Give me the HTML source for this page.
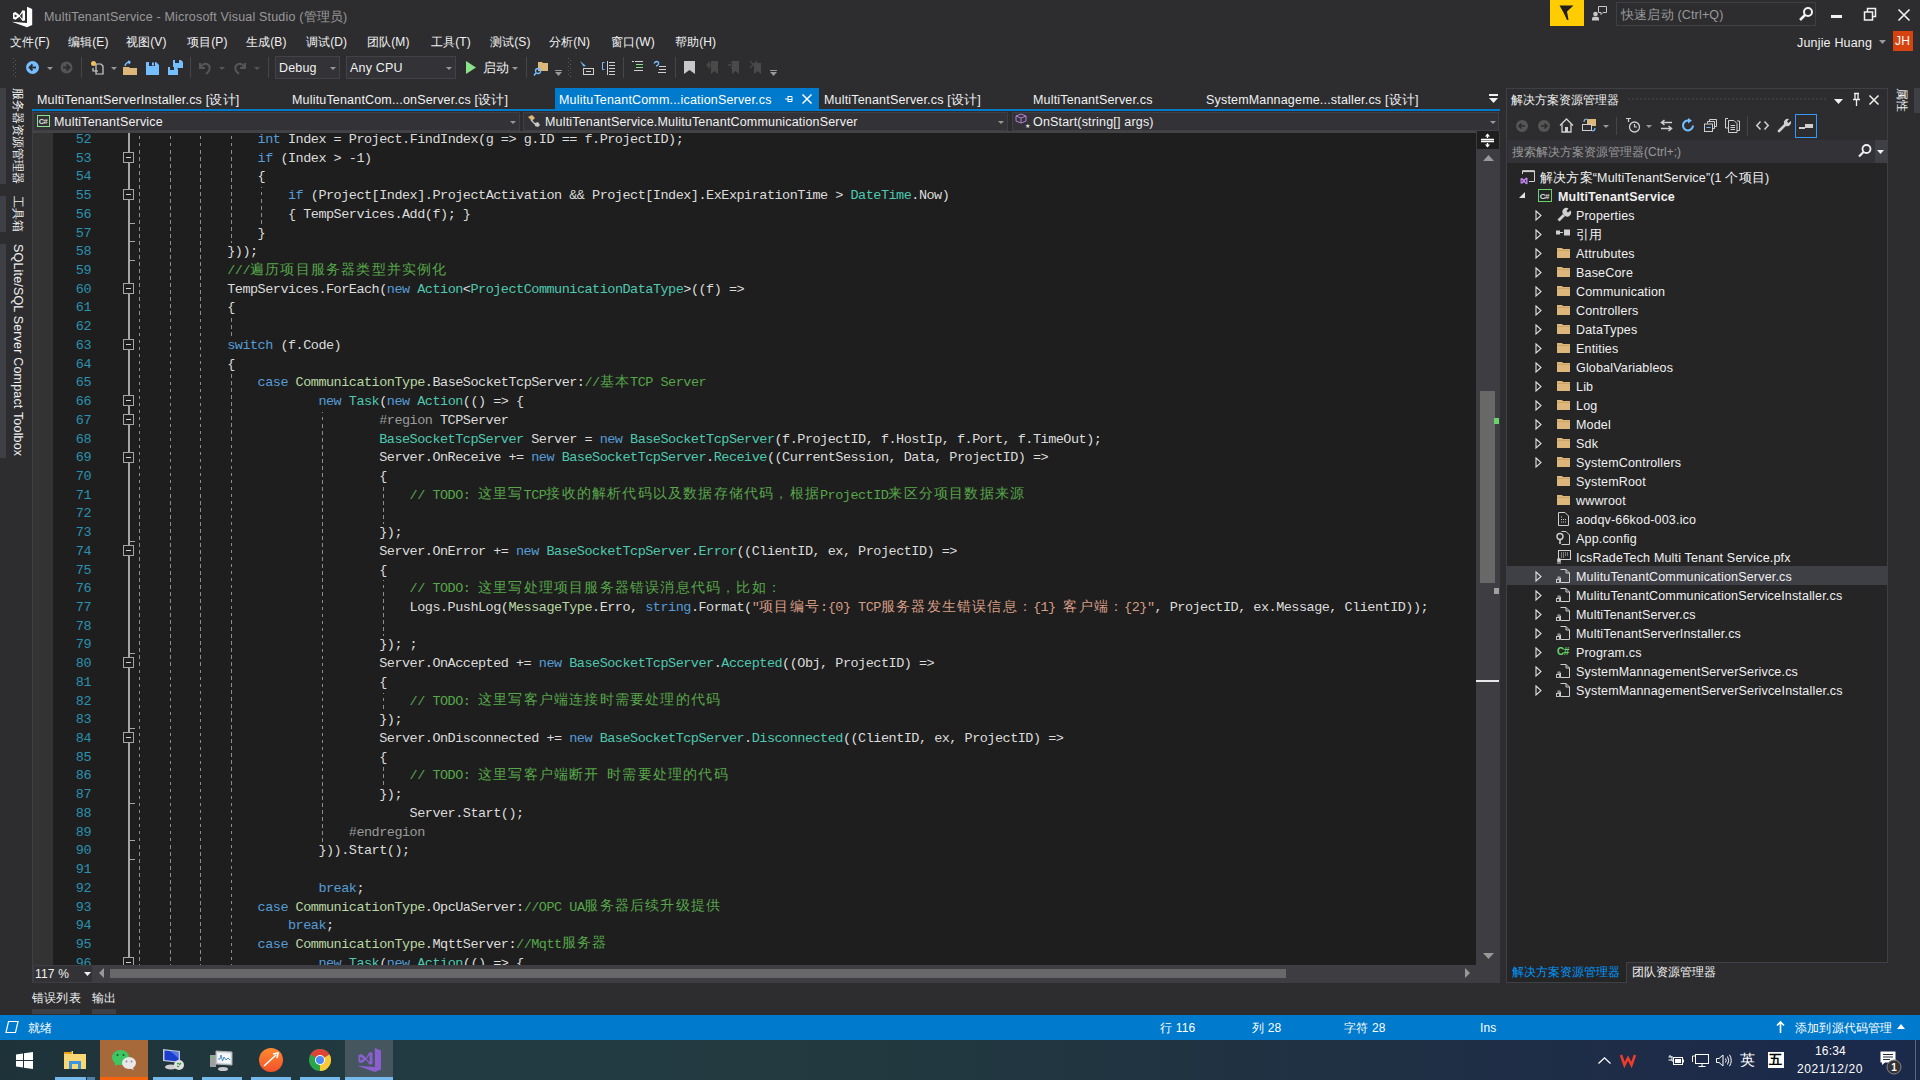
<!DOCTYPE html>
<html><head><meta charset="utf-8"><title>MultiTenantService - Microsoft Visual Studio</title>
<style>
*{margin:0;padding:0;box-sizing:border-box}
html,body{width:1920px;height:1080px;overflow:hidden;background:#2d2d30;font-family:"Liberation Sans",sans-serif;font-size:12px;color:#f1f1f1;position:relative}
.a{position:absolute}
.t{position:absolute;white-space:nowrap;line-height:16px;letter-spacing:0.18px}
svg{overflow:visible}
.code{position:absolute;white-space:pre;font-family:"Liberation Mono",monospace;font-size:13.5px;letter-spacing:-0.5px;color:#dcdcdc;line-height:18px;height:18px}
.code i{font-style:normal}
.code b.w{display:inline-block;font-weight:normal;overflow:hidden;vertical-align:top;position:relative;top:-1.5px;letter-spacing:1.2px;font-size:14px;height:18px}
.K{color:#569cd6}.T{color:#4ec9b0}.E{color:#b8d7a3}.C{color:#57a64a}.S{color:#d69d85}.P{color:#9b9b9b}
.lnum{position:absolute;font-family:"Liberation Mono",monospace;font-size:13.5px;letter-spacing:-0.5px;color:#2b91af;text-align:right;width:40px;line-height:18px}
.menu{font-size:12px;color:#f1f1f1;letter-spacing:0.1px}
.se{font-size:12.5px;color:#f1f1f1}
.guide{position:absolute;width:1px;background:repeating-linear-gradient(to bottom,transparent 0,transparent 2.6px,#8c8c8c 2.6px,#8c8c8c 6.1px,transparent 6.1px,transparent 7.02px);background-attachment:fixed}
</style></head><body>
<svg class="a" style="left:0px;top:0px" width="40" height="30" viewBox="0 0 40 30" ><path d="M27 6.8 L32.2 9 L32.2 25 L27 27.2 Z" fill="#fff"/><path d="M11.8 21.8 L27 23 L27 27.2 Z" fill="#fff"/><path fill-rule="evenodd" d="M13 13 L15.5 12 L19.5 15 L22.5 10.2 L25 10.8 L25 20.5 L22.5 21 L19.5 16.8 L15.5 19.8 L13 18.8 Z M14.6 14.2 L14.6 17.6 L17.4 15.9 Z M22.5 12.8 L22.5 19 L19.9 15.9 Z" fill="#fff"/></svg><div class="t " style="left:44px;top:9px;font-size:12.5px;color:#999999">MultiTenantService - Microsoft Visual Studio (<span class="cj">管理员</span>)</div><div class="a" style="left:1550px;top:0px;width:34px;height:26px;background:#ffcc00;"></div><svg class="a" style="left:1559px;top:5px" width="16" height="16" viewBox="0 0 16 16" ><path d="M0.5 0.5 L14.5 0.5 L8 6.5 L9.5 15 L8 15 L4.5 7.5 Z" fill="#1e1e1e"/></svg><svg class="a" style="left:1592px;top:5px" width="16" height="16" viewBox="0 0 16 16" ><circle cx="3.5" cy="9" r="2.3" fill="#c8c8c8"/><path d="M0 15.5 V13.5 Q0 11.8 2 11.8 H5 Q7 11.8 7 13.5 V15.5 Z" fill="#c8c8c8"/><path d="M6.5 1.5 H14.5 V7.5 H11 L9 9.5 V7.5 H6.5 Z" fill="none" stroke="#c8c8c8" stroke-width="1"/></svg><div class="a" style="left:1616px;top:2px;width:200px;height:24px;background:#2d2d30;border:1px solid #3f3f46"></div><div class="t " style="left:1621px;top:7px;font-size:12.5px;color:#999999"><span class="cj">快速启动</span> (Ctrl+Q)</div><svg class="a" style="left:1799px;top:7px" width="14" height="14" viewBox="0 0 14 14" ><circle cx="9" cy="5" r="4" fill="none" stroke="#f1f1f1" stroke-width="2"/><path d="M6 8 L1 13" stroke="#f1f1f1" stroke-width="2.5"/></svg><div class="a" style="left:1831px;top:15px;width:11px;height:3px;background:#f1f1f1;"></div><svg class="a" style="left:1864px;top:8px" width="13" height="13" viewBox="0 0 13 13" ><rect x="3.5" y="0.5" width="8" height="8" fill="none" stroke="#f1f1f1" stroke-width="1.5"/><rect x="0.5" y="4" width="8" height="8" fill="#2d2d30" stroke="#f1f1f1" stroke-width="1.5"/></svg><svg class="a" style="left:1898px;top:9px" width="12" height="12" viewBox="0 0 12 12" ><path d="M0.5 0.5 L11.5 11.5 M11.5 0.5 L0.5 11.5" stroke="#f1f1f1" stroke-width="1.6"/></svg><div class="t menu" style="left:10px;top:34px;"><span class="cj">文件</span>(F)</div><div class="t menu" style="left:68px;top:34px;"><span class="cj">编辑</span>(E)</div><div class="t menu" style="left:126px;top:34px;"><span class="cj">视图</span>(V)</div><div class="t menu" style="left:187px;top:34px;"><span class="cj">项目</span>(P)</div><div class="t menu" style="left:246px;top:34px;"><span class="cj">生成</span>(B)</div><div class="t menu" style="left:306px;top:34px;"><span class="cj">调试</span>(D)</div><div class="t menu" style="left:367px;top:34px;"><span class="cj">团队</span>(M)</div><div class="t menu" style="left:431px;top:34px;"><span class="cj">工具</span>(T)</div><div class="t menu" style="left:490px;top:34px;"><span class="cj">测试</span>(S)</div><div class="t menu" style="left:549px;top:34px;"><span class="cj">分析</span>(N)</div><div class="t menu" style="left:611px;top:34px;"><span class="cj">窗口</span>(W)</div><div class="t menu" style="left:675px;top:34px;"><span class="cj">帮助</span>(H)</div><div class="t " style="left:1797px;top:35px;font-size:12.5px;color:#f1f1f1">Junjie Huang</div><svg class="a" style="left:1879px;top:40px" width="7" height="4" viewBox="0 0 7 4" ><path d="M0 0 H7 L3.5 4 Z" fill="#999"/></svg><div class="a" style="left:1893px;top:31px;width:20px;height:20px;background:#d6430e;"></div><div class="t " style="left:1895px;top:33px;font-size:12px;color:#fff">JH</div><svg class="a" style="left:13px;top:58px" width="3" height="20" viewBox="0 0 3 20" ><rect x="0" y="0" width="1" height="1" fill="#5a5a5e"/><rect x="2" y="2" width="1" height="1" fill="#5a5a5e"/><rect x="0" y="4" width="1" height="1" fill="#5a5a5e"/><rect x="2" y="6" width="1" height="1" fill="#5a5a5e"/><rect x="0" y="8" width="1" height="1" fill="#5a5a5e"/><rect x="2" y="10" width="1" height="1" fill="#5a5a5e"/><rect x="0" y="12" width="1" height="1" fill="#5a5a5e"/><rect x="2" y="14" width="1" height="1" fill="#5a5a5e"/><rect x="0" y="16" width="1" height="1" fill="#5a5a5e"/><rect x="2" y="18" width="1" height="1" fill="#5a5a5e"/></svg><svg class="a" style="left:26px;top:61px" width="13" height="13" viewBox="0 0 13 13" ><circle cx="6.5" cy="6.5" r="6.5" fill="#75beff"/><path d="M10 6.5 H3.5 M6.5 3.5 L3.5 6.5 L6.5 9.5" stroke="#2d2d30" stroke-width="1.8" fill="none"/></svg><svg class="a" style="left:47px;top:67px" width="6" height="3" viewBox="0 0 6 3" ><path d="M0 0 H6 L3 3 Z" fill="#999999"/></svg><svg class="a" style="left:60px;top:61px" width="13" height="13" viewBox="0 0 13 13" ><circle cx="6.5" cy="6.5" r="6" fill="#555555"/><path d="M3 6.5 H9.5 M6.5 3.5 L9.5 6.5 L6.5 9.5" stroke="#2d2d30" stroke-width="1.8" fill="none"/></svg><div class="a" style="left:81px;top:57px;width:1px;height:21px;background:#46464a;"></div><svg class="a" style="left:90px;top:60px" width="14" height="15" viewBox="0 0 14 15" ><path d="M6 4 H11 L13 6 V14 H6 Z" fill="none" stroke="#d0d0d0" stroke-width="1.2"/><path d="M3 8 V11 H8" fill="none" stroke="#d0d0d0" stroke-width="1.2"/><circle cx="3.5" cy="3.5" r="2.5" fill="#f0c060"/></svg><svg class="a" style="left:111px;top:67px" width="6" height="3" viewBox="0 0 6 3" ><path d="M0 0 H6 L3 3 Z" fill="#999999"/></svg><svg class="a" style="left:123px;top:61px" width="15" height="14" viewBox="0 0 15 14" ><path d="M0 6 H6 L7 7 H14 V14 H0 Z" fill="#dcb67a"/><path d="M2 5 Q3 1 7 1 M5 0 L7 1 L6 3" stroke="#75beff" stroke-width="1.4" fill="none"/></svg><svg class="a" style="left:146px;top:62px" width="13" height="13" viewBox="0 0 13 13" ><path d="M0 0 H10 L13 3 V13 H0 Z" fill="#75beff"/><rect x="3" y="0" width="6" height="4" fill="#2d2d30"/><rect x="6" y="0.5" width="2" height="3" fill="#75beff"/></svg><svg class="a" style="left:168px;top:60px" width="15" height="15" viewBox="0 0 15 15" ><path d="M5 0 H13 L15 2 V8 H5 Z" fill="#75beff"/><path d="M0 7 H8 L10 9 V15 H0 Z" fill="#75beff"/><rect x="7" y="0" width="4" height="3" fill="#2d2d30"/><rect x="2" y="7" width="4" height="3" fill="#2d2d30"/></svg><div class="a" style="left:190px;top:57px;width:1px;height:21px;background:#46464a;"></div><svg class="a" style="left:198px;top:61px" width="14" height="14" viewBox="0 0 14 14" ><path d="M2 2 V7 H7 M2.5 6.5 Q5 2 9 3 Q13 5 11 10 L8 13" stroke="#555" stroke-width="2" fill="none"/></svg><svg class="a" style="left:219px;top:67px" width="6" height="3" viewBox="0 0 6 3" ><path d="M0 0 H6 L3 3 Z" fill="#555"/></svg><svg class="a" style="left:233px;top:61px" width="14" height="14" viewBox="0 0 14 14" ><path d="M12 2 V7 H7 M11.5 6.5 Q9 2 5 3 Q1 5 3 10 L6 13" stroke="#555" stroke-width="2" fill="none"/></svg><svg class="a" style="left:254px;top:67px" width="6" height="3" viewBox="0 0 6 3" ><path d="M0 0 H6 L3 3 Z" fill="#555"/></svg><div class="a" style="left:268px;top:57px;width:1px;height:21px;background:#46464a;"></div><div class="a" style="left:275px;top:56px;width:65px;height:23px;background:#333337;border:1px solid #434346"></div><div class="t " style="left:279px;top:60px;font-size:12.5px">Debug</div><svg class="a" style="left:330px;top:67px" width="6" height="3" viewBox="0 0 6 3" ><path d="M0 0 H6 L3 3 Z" fill="#999999"/></svg><div class="a" style="left:346px;top:56px;width:110px;height:23px;background:#333337;border:1px solid #434346"></div><div class="t " style="left:350px;top:60px;font-size:12.5px">Any CPU</div><svg class="a" style="left:446px;top:67px" width="6" height="3" viewBox="0 0 6 3" ><path d="M0 0 H6 L3 3 Z" fill="#999999"/></svg><svg class="a" style="left:466px;top:61px" width="10" height="13" viewBox="0 0 10 13" ><path d="M0 0 L10 6.5 L0 13 Z" fill="#8ae28a"/></svg><div class="t " style="left:483px;top:60px;font-size:12.5px"><span class="cj">启动</span></div><svg class="a" style="left:512px;top:67px" width="6" height="3" viewBox="0 0 6 3" ><path d="M0 0 H6 L3 3 Z" fill="#999999"/></svg><div class="a" style="left:526px;top:57px;width:1px;height:21px;background:#46464a;"></div><svg class="a" style="left:534px;top:60px" width="15" height="16" viewBox="0 0 15 16" ><path d="M4 2 H8 L9 3 H14 V11 H4 Z" fill="#dcb67a"/><circle cx="4" cy="11" r="2.5" fill="none" stroke="#75beff" stroke-width="1.3"/><path d="M2 13 L0 15.5" stroke="#75beff" stroke-width="1.5"/></svg><svg class="a" style="left:555px;top:70px" width="7" height="6" viewBox="0 0 7 6" ><rect x="0" y="0" width="7" height="1" fill="#999"/><path d="M0 2 H7 L3.5 6 Z" fill="#999"/></svg><svg class="a" style="left:568px;top:58px" width="3" height="20" viewBox="0 0 3 20" ><rect x="0" y="0" width="1" height="1" fill="#5a5a5e"/><rect x="2" y="2" width="1" height="1" fill="#5a5a5e"/><rect x="0" y="4" width="1" height="1" fill="#5a5a5e"/><rect x="2" y="6" width="1" height="1" fill="#5a5a5e"/><rect x="0" y="8" width="1" height="1" fill="#5a5a5e"/><rect x="2" y="10" width="1" height="1" fill="#5a5a5e"/><rect x="0" y="12" width="1" height="1" fill="#5a5a5e"/><rect x="2" y="14" width="1" height="1" fill="#5a5a5e"/><rect x="0" y="16" width="1" height="1" fill="#5a5a5e"/><rect x="2" y="18" width="1" height="1" fill="#5a5a5e"/></svg><svg class="a" style="left:580px;top:61px" width="14" height="14" viewBox="0 0 14 14" ><path d="M0 0 L6 5 L3.5 5.5 L5 8 Z" fill="#75beff"/><rect x="3.5" y="7.5" width="10" height="6" fill="none" stroke="#d0d0d0" stroke-width="1"/><rect x="6" y="10" width="5" height="1" fill="#d0d0d0"/></svg><svg class="a" style="left:601px;top:61px" width="14" height="14" viewBox="0 0 14 14" ><path d="M3.5 1.5 H1.5 V8.5 H3.5" stroke="#75beff" stroke-width="1" fill="none"/><path d="M6.5 0 V14" stroke="#d0d0d0" stroke-width="1"/><path d="M8 1.5 H14 M8 4.5 H14 M8 7.5 H14 M8 10.5 H14 M8 13.5 H14" stroke="#d0d0d0" stroke-width="1"/></svg><div class="a" style="left:623px;top:57px;width:1px;height:21px;background:#46464a;"></div><svg class="a" style="left:632px;top:61px" width="12" height="12" viewBox="0 0 12 12" ><path d="M3 0.5 H11 M4 3.5 H11 M4 6.5 H11 M2 9.5 H11" stroke="#d0d0d0" stroke-width="1"/><path d="M4 3.5 H11 M4 6.5 H11" stroke="#8ae28a" stroke-width="1"/><rect x="0" y="0" width="2" height="1" fill="#d0d0d0"/></svg><svg class="a" style="left:653px;top:61px" width="13" height="13" viewBox="0 0 13 13" ><path d="M1 2.5 Q2 0.5 4 0.5 Q6 1 5.5 3 Q5 4.5 3 5" stroke="#75beff" stroke-width="1.3" fill="none"/><path d="M6 5.5 H13 M6 8.5 H13 M5 11.5 H13" stroke="#d0d0d0" stroke-width="1"/></svg><div class="a" style="left:675px;top:57px;width:1px;height:21px;background:#46464a;"></div><svg class="a" style="left:684px;top:61px" width="11" height="13" viewBox="0 0 11 13" ><path d="M0 0 H11 V13 L5.5 9 L0 13 Z" fill="#c8c8c8"/></svg><svg class="a" style="left:707px;top:61px" width="12" height="13" viewBox="0 0 12 13" ><path d="M4 0 H11 V13 L7.5 10 L4 13 Z" fill="#4a4a4a"/><path d="M0 4 L3 1 M0 4 L3 7 M0 4 H6" stroke="#4a4a4a" stroke-width="1.5"/></svg><svg class="a" style="left:728px;top:61px" width="12" height="13" viewBox="0 0 12 13" ><path d="M4 0 H11 V13 L7.5 10 L4 13 Z" fill="#4a4a4a"/><path d="M0 4 H6 M3 1 L6 4 L3 7" stroke="#4a4a4a" stroke-width="1.5"/></svg><svg class="a" style="left:750px;top:61px" width="12" height="13" viewBox="0 0 12 13" ><path d="M4 2 H11 V13 L7.5 10 L4 13 Z" fill="#4a4a4a"/><path d="M0 0 L7 7 M7 0 L0 7" stroke="#4a4a4a" stroke-width="1.3"/></svg><svg class="a" style="left:770px;top:70px" width="7" height="6" viewBox="0 0 7 6" ><rect x="0" y="0" width="7" height="1" fill="#999"/><path d="M0 2 H7 L3.5 6 Z" fill="#999"/></svg><div class="a" style="left:0px;top:88px;width:6px;height:96px;background:#3f3f46;"></div><div class="a" style="left:0px;top:196px;width:6px;height:36px;background:#3f3f46;"></div><div class="a" style="left:0px;top:244px;width:6px;height:214px;background:#3f3f46;"></div><div class="t" style="left:26px;top:88px;transform-origin:0 0;transform:rotate(90deg);font-size:12.5px;color:#f1f1f1;font-size:11.8px;letter-spacing:0"><span class="cj">服务器资源管理器</span></div><div class="t" style="left:26px;top:196px;transform-origin:0 0;transform:rotate(90deg);font-size:12.5px;color:#f1f1f1;font-size:11.8px;letter-spacing:0"><span class="cj">工具箱</span></div><div class="t" style="left:26px;top:244px;transform-origin:0 0;transform:rotate(90deg);font-size:12.5px;color:#f1f1f1;">SQLite/SQL Server Compact Toolbox</div><div class="t " style="left:37px;top:92px;font-size:12.5px;color:#f1f1f1">MultiTenantServerInstaller.cs [<span class="cj">设计</span>]</div><div class="t " style="left:292px;top:92px;font-size:12.5px;color:#f1f1f1">MulituTenantCom...onServer.cs [<span class="cj">设计</span>]</div><div class="t " style="left:824px;top:92px;font-size:12.5px;color:#f1f1f1">MultiTenantServer.cs [<span class="cj">设计</span>]</div><div class="t " style="left:1033px;top:92px;font-size:12.5px;color:#f1f1f1">MultiTenantServer.cs</div><div class="t " style="left:1206px;top:92px;font-size:12.5px;color:#f1f1f1">SystemMannageme...staller.cs [<span class="cj">设计</span>]</div><div class="a" style="left:555px;top:88px;width:264px;height:22px;background:#007acc;"></div><div class="t " style="left:559px;top:92px;font-size:12.5px;color:#ffffff">MulituTenantComm...icationServer.cs</div><svg class="a" style="left:785px;top:95px" width="8" height="8" viewBox="0 0 8 8" ><path d="M0 4 H3 M3 1 V7 M3 1.5 H7 V6.5 H3 M3 4.5 H7" stroke="#fff" stroke-width="1" fill="none"/></svg><svg class="a" style="left:802px;top:94px" width="10" height="10" viewBox="0 0 10 10" ><path d="M0.5 0.5 L9.5 9.5 M9.5 0.5 L0.5 9.5" stroke="#fff" stroke-width="1.5"/></svg><svg class="a" style="left:1489px;top:94px" width="9" height="9" viewBox="0 0 9 9" ><rect x="0" y="0" width="9" height="2" fill="#f1f1f1"/><path d="M0 4 H9 L4.5 9 Z" fill="#f1f1f1"/></svg><div class="a" style="left:32px;top:109px;width:1468px;height:2px;background:#007acc;"></div><div class="a" style="left:32px;top:111px;width:1468px;height:20px;background:#2d2d30;"></div><div class="a" style="left:33px;top:112px;width:487px;height:19px;background:#333337;border:1px solid #3f3f46"></div><svg class="a" style="left:37px;top:115px" width="13" height="12" viewBox="0 0 13 12" ><rect x="0.5" y="0.5" width="12" height="11" fill="none" stroke="#8ae28a" stroke-width="1"/><text x="1.8" y="9" font-family="Liberation Sans" font-size="7.5" font-weight="bold" letter-spacing="-0.6" fill="#e0e0e0">C#</text></svg><div class="t " style="left:54px;top:114px;font-size:12.5px">MultiTenantService</div><svg class="a" style="left:510px;top:121px" width="6" height="3" viewBox="0 0 6 3" ><path d="M0 0 H6 L3 3 Z" fill="#999999"/></svg><div class="a" style="left:523px;top:112px;width:485px;height:19px;background:#333337;border:1px solid #3f3f46"></div><svg class="a" style="left:527px;top:114px" width="14" height="14" viewBox="0 0 14 14" ><path d="M1 3 L5 1 L8 4 L5 7 Z" fill="#dcb67a"/><path d="M4 6 L9 11" stroke="#c8c8c8" stroke-width="1.2"/><path d="M8 9 L11 8 L13 11 L11 13 L8 12 Z" fill="#c8c8c8"/></svg><div class="t " style="left:545px;top:114px;font-size:12.5px">MultiTenantService.MulituTenantCommunicationServer</div><svg class="a" style="left:998px;top:121px" width="6" height="3" viewBox="0 0 6 3" ><path d="M0 0 H6 L3 3 Z" fill="#999999"/></svg><div class="a" style="left:1012px;top:112px;width:487px;height:19px;background:#333337;border:1px solid #3f3f46"></div><svg class="a" style="left:1016px;top:113px" width="14" height="15" viewBox="0 0 14 15" ><path d="M5 1 L10 3 L10 8 L5 10 L0 8 L0 3 Z" fill="none" stroke="#b180d7" stroke-width="1"/><path d="M0 3 L5 5 L10 3 M5 5 V10" stroke="#b180d7" stroke-width="1" fill="none"/><text x="9" y="15" font-size="6" fill="#ddd">★</text></svg><div class="t " style="left:1033px;top:114px;font-size:12.5px">OnStart(string[] args)</div><svg class="a" style="left:1490px;top:121px" width="6" height="3" viewBox="0 0 6 3" ><path d="M0 0 H6 L3 3 Z" fill="#999999"/></svg><div class="a" style="left:32px;top:111px;width:1px;height:872px;background:#3f3f46;"></div><div class="a" style="left:33px;top:131px;width:20px;height:834px;background:#333333;"></div><div class="a" style="left:53px;top:131px;width:1423px;height:834px;background:#1e1e1e;"></div><div class="a" style="left:33px;top:131px;width:1443px;height:834px;overflow:hidden"><div class="lnum" style="left:18.0px;top:0.00px">52</div><div class="lnum" style="left:18.0px;top:18.72px">53</div><div class="lnum" style="left:18.0px;top:37.44px">54</div><div class="lnum" style="left:18.0px;top:56.16px">55</div><div class="lnum" style="left:18.0px;top:74.88px">56</div><div class="lnum" style="left:18.0px;top:93.60px">57</div><div class="lnum" style="left:18.0px;top:112.32px">58</div><div class="lnum" style="left:18.0px;top:131.04px">59</div><div class="lnum" style="left:18.0px;top:149.76px">60</div><div class="lnum" style="left:18.0px;top:168.48px">61</div><div class="lnum" style="left:18.0px;top:187.20px">62</div><div class="lnum" style="left:18.0px;top:205.92px">63</div><div class="lnum" style="left:18.0px;top:224.64px">64</div><div class="lnum" style="left:18.0px;top:243.36px">65</div><div class="lnum" style="left:18.0px;top:262.08px">66</div><div class="lnum" style="left:18.0px;top:280.80px">67</div><div class="lnum" style="left:18.0px;top:299.52px">68</div><div class="lnum" style="left:18.0px;top:318.24px">69</div><div class="lnum" style="left:18.0px;top:336.96px">70</div><div class="lnum" style="left:18.0px;top:355.68px">71</div><div class="lnum" style="left:18.0px;top:374.40px">72</div><div class="lnum" style="left:18.0px;top:393.12px">73</div><div class="lnum" style="left:18.0px;top:411.84px">74</div><div class="lnum" style="left:18.0px;top:430.56px">75</div><div class="lnum" style="left:18.0px;top:449.28px">76</div><div class="lnum" style="left:18.0px;top:468.00px">77</div><div class="lnum" style="left:18.0px;top:486.72px">78</div><div class="lnum" style="left:18.0px;top:505.44px">79</div><div class="lnum" style="left:18.0px;top:524.16px">80</div><div class="lnum" style="left:18.0px;top:542.88px">81</div><div class="lnum" style="left:18.0px;top:561.60px">82</div><div class="lnum" style="left:18.0px;top:580.32px">83</div><div class="lnum" style="left:18.0px;top:599.04px">84</div><div class="lnum" style="left:18.0px;top:617.76px">85</div><div class="lnum" style="left:18.0px;top:636.48px">86</div><div class="lnum" style="left:18.0px;top:655.20px">87</div><div class="lnum" style="left:18.0px;top:673.92px">88</div><div class="lnum" style="left:18.0px;top:692.64px">89</div><div class="lnum" style="left:18.0px;top:711.36px">90</div><div class="lnum" style="left:18.0px;top:730.08px">91</div><div class="lnum" style="left:18.0px;top:748.80px">92</div><div class="lnum" style="left:18.0px;top:767.52px">93</div><div class="lnum" style="left:18.0px;top:786.24px">94</div><div class="lnum" style="left:18.0px;top:804.96px">95</div><div class="lnum" style="left:18.0px;top:823.68px">96</div><div class="a" style="left:95px;top:0px;width:2px;height:834px;background:#a5a5a5;"></div><div class="a" style="left:90px;top:21.02px;width:11px;height:11px;background:#1e1e1e;border:1px solid #a5a5a5"></div><div class="a" style="left:93px;top:26.02px;width:5px;height:1px;background:#d0d0d0;"></div><div class="a" style="left:90px;top:58.46px;width:11px;height:11px;background:#1e1e1e;border:1px solid #a5a5a5"></div><div class="a" style="left:93px;top:63.46px;width:5px;height:1px;background:#d0d0d0;"></div><div class="a" style="left:90px;top:152.06px;width:11px;height:11px;background:#1e1e1e;border:1px solid #a5a5a5"></div><div class="a" style="left:93px;top:157.06px;width:5px;height:1px;background:#d0d0d0;"></div><div class="a" style="left:90px;top:208.22px;width:11px;height:11px;background:#1e1e1e;border:1px solid #a5a5a5"></div><div class="a" style="left:93px;top:213.22px;width:5px;height:1px;background:#d0d0d0;"></div><div class="a" style="left:90px;top:264.38px;width:11px;height:11px;background:#1e1e1e;border:1px solid #a5a5a5"></div><div class="a" style="left:93px;top:269.38px;width:5px;height:1px;background:#d0d0d0;"></div><div class="a" style="left:90px;top:283.10px;width:11px;height:11px;background:#1e1e1e;border:1px solid #a5a5a5"></div><div class="a" style="left:93px;top:288.10px;width:5px;height:1px;background:#d0d0d0;"></div><div class="a" style="left:90px;top:320.54px;width:11px;height:11px;background:#1e1e1e;border:1px solid #a5a5a5"></div><div class="a" style="left:93px;top:325.54px;width:5px;height:1px;background:#d0d0d0;"></div><div class="a" style="left:90px;top:414.14px;width:11px;height:11px;background:#1e1e1e;border:1px solid #a5a5a5"></div><div class="a" style="left:93px;top:419.14px;width:5px;height:1px;background:#d0d0d0;"></div><div class="a" style="left:90px;top:526.46px;width:11px;height:11px;background:#1e1e1e;border:1px solid #a5a5a5"></div><div class="a" style="left:93px;top:531.46px;width:5px;height:1px;background:#d0d0d0;"></div><div class="a" style="left:90px;top:601.34px;width:11px;height:11px;background:#1e1e1e;border:1px solid #a5a5a5"></div><div class="a" style="left:93px;top:606.34px;width:5px;height:1px;background:#d0d0d0;"></div><div class="a" style="left:90px;top:825.98px;width:11px;height:11px;background:#1e1e1e;border:1px solid #a5a5a5"></div><div class="a" style="left:93px;top:830.98px;width:5px;height:1px;background:#d0d0d0;"></div><div class="a" style="left:97px;top:91.60px;width:5px;height:1px;background:#a5a5a5"></div><div class="a" style="left:97px;top:110.32px;width:5px;height:1px;background:#a5a5a5"></div><div class="a" style="left:97px;top:129.04px;width:5px;height:1px;background:#a5a5a5"></div><div class="a" style="left:97px;top:409.84px;width:5px;height:1px;background:#a5a5a5"></div><div class="a" style="left:97px;top:522.16px;width:5px;height:1px;background:#a5a5a5"></div><div class="a" style="left:97px;top:597.04px;width:5px;height:1px;background:#a5a5a5"></div><div class="a" style="left:97px;top:671.92px;width:5px;height:1px;background:#a5a5a5"></div><div class="a" style="left:97px;top:709.36px;width:5px;height:1px;background:#a5a5a5"></div><div class="a" style="left:97px;top:728.08px;width:5px;height:1px;background:#a5a5a5"></div><div class="guide" style="left:106.0px;top:0.00px;height:842.40px"></div><div class="guide" style="left:137.0px;top:0.00px;height:842.40px"></div><div class="guide" style="left:167.0px;top:0.00px;height:842.40px"></div><div class="guide" style="left:198.0px;top:0.00px;height:112.32px"></div><div class="guide" style="left:228.0px;top:56.16px;height:37.44px"></div><div class="guide" style="left:198.0px;top:187.20px;height:18.72px"></div><div class="guide" style="left:198.0px;top:243.36px;height:599.04px"></div><div class="guide" style="left:289.0px;top:280.80px;height:430.56px"></div><div class="guide" style="left:350.0px;top:355.68px;height:37.44px"></div><div class="guide" style="left:350.0px;top:449.28px;height:56.16px"></div><div class="guide" style="left:350.0px;top:561.60px;height:18.72px"></div><div class="guide" style="left:350.0px;top:636.48px;height:18.72px"></div><div class="code" style="left:224.60px;top:0.00px"><i class="K">int</i> Index = Project.FindIndex(g =&gt; g.ID == f.ProjectID);</div><div class="code" style="left:224.60px;top:18.72px"><i class="K">if</i> (Index &gt; -1)</div><div class="code" style="left:224.60px;top:37.44px">{</div><div class="code" style="left:255.00px;top:56.16px"><i class="K">if</i> (Project[Index].ProjectActivation &amp;&amp; Project[Index].ExExpirationTime &gt; <i class="T">DateTime</i>.Now)</div><div class="code" style="left:255.00px;top:74.88px">{ TempServices.Add(f); }</div><div class="code" style="left:224.60px;top:93.60px">}</div><div class="code" style="left:194.20px;top:112.32px">}));</div><div class="code" style="left:194.20px;top:131.04px"><i class="C">///<b class="w" style="width:197.60px">遍历项目服务器类型并实例化</b></i></div><div class="code" style="left:194.20px;top:149.76px">TempServices.ForEach(<i class="K">new</i> <i class="T">Action</i>&lt;<i class="T">ProjectCommunicationDataType</i>&gt;((f) =&gt;</div><div class="code" style="left:194.20px;top:168.48px">{</div><div class="code" style="left:194.20px;top:187.20px"></div><div class="code" style="left:194.20px;top:205.92px"><i class="K">switch</i> (f.Code)</div><div class="code" style="left:194.20px;top:224.64px">{</div><div class="code" style="left:224.60px;top:243.36px"><i class="K">case</i> <i class="E">CommunicationType</i>.BaseSocketTcpServer:<i class="C">//<b class="w" style="width:30.40px">基本</b>TCP Server</i></div><div class="code" style="left:285.40px;top:262.08px"><i class="K">new</i> <i class="T">Task</i>(<i class="K">new</i> <i class="T">Action</i>(() =&gt; {</div><div class="code" style="left:346.20px;top:280.80px"><i class="P">#region</i> TCPServer</div><div class="code" style="left:346.20px;top:299.52px"><i class="T">BaseSocketTcpServer</i> Server = <i class="K">new</i> <i class="T">BaseSocketTcpServer</i>(f.ProjectID, f.HostIp, f.Port, f.TimeOut);</div><div class="code" style="left:346.20px;top:318.24px">Server.OnReceive += <i class="K">new</i> <i class="T">BaseSocketTcpServer</i>.<i class="T">Receive</i>((CurrentSession, Data, ProjectID) =&gt;</div><div class="code" style="left:346.20px;top:336.96px">{</div><div class="code" style="left:376.60px;top:355.68px"><i class="C">// TODO: <b class="w" style="width:45.60px">这里写</b>TCP<b class="w" style="width:273.60px">接收的解析代码以及数据存储代码，根据</b>ProjectID<b class="w" style="width:136.80px">来区分项目数据来源</b></i></div><div class="code" style="left:346.20px;top:374.40px"></div><div class="code" style="left:346.20px;top:393.12px">});</div><div class="code" style="left:346.20px;top:411.84px">Server.OnError += <i class="K">new</i> <i class="T">BaseSocketTcpServer</i>.<i class="T">Error</i>((ClientID, ex, ProjectID) =&gt;</div><div class="code" style="left:346.20px;top:430.56px">{</div><div class="code" style="left:376.60px;top:449.28px"><i class="C">// TODO: <b class="w" style="width:304.00px">这里写处理项目服务器错误消息代码，比如：</b></i></div><div class="code" style="left:376.60px;top:468.00px">Logs.PushLog(<i class="E">MessageType</i>.Erro, <i class="K">string</i>.Format(<i class="S">&quot;<b class="w" style="width:60.80px">项目编号</b>:{0} TCP<b class="w" style="width:152.00px">服务器发生错误信息：</b>{1} <b class="w" style="width:60.80px">客户端：</b>{2}&quot;</i>, ProjectID, ex.Message, ClientID));</div><div class="code" style="left:346.20px;top:486.72px"></div><div class="code" style="left:346.20px;top:505.44px">}); ;</div><div class="code" style="left:346.20px;top:524.16px">Server.OnAccepted += <i class="K">new</i> <i class="T">BaseSocketTcpServer</i>.<i class="T">Accepted</i>((Obj, ProjectID) =&gt;</div><div class="code" style="left:346.20px;top:542.88px">{</div><div class="code" style="left:376.60px;top:561.60px"><i class="C">// TODO: <b class="w" style="width:243.20px">这里写客户端连接时需要处理的代码</b></i></div><div class="code" style="left:346.20px;top:580.32px">});</div><div class="code" style="left:346.20px;top:599.04px">Server.OnDisconnected += <i class="K">new</i> <i class="T">BaseSocketTcpServer</i>.<i class="T">Disconnected</i>((ClientID, ex, ProjectID) =&gt;</div><div class="code" style="left:346.20px;top:617.76px">{</div><div class="code" style="left:376.60px;top:636.48px"><i class="C">// TODO: <b class="w" style="width:121.60px">这里写客户端断开</b> <b class="w" style="width:121.60px">时需要处理的代码</b></i></div><div class="code" style="left:346.20px;top:655.20px">});</div><div class="code" style="left:376.60px;top:673.92px">Server.Start();</div><div class="code" style="left:315.80px;top:692.64px"><i class="P">#endregion</i></div><div class="code" style="left:285.40px;top:711.36px">})).Start();</div><div class="code" style="left:285.40px;top:730.08px"></div><div class="code" style="left:285.40px;top:748.80px"><i class="K">break</i>;</div><div class="code" style="left:224.60px;top:767.52px"><i class="K">case</i> <i class="E">CommunicationType</i>.OpcUaServer:<i class="C">//OPC UA<b class="w" style="width:136.80px">服务器后续升级提供</b></i></div><div class="code" style="left:255.00px;top:786.24px"><i class="K">break</i>;</div><div class="code" style="left:224.60px;top:804.96px"><i class="K">case</i> <i class="E">CommunicationType</i>.MqttServer:<i class="C">//Mqtt<b class="w" style="width:45.60px">服务器</b></i></div><div class="code" style="left:285.40px;top:823.68px"><i class="K">new</i> <i class="T">Task</i>(<i class="K">new</i> <i class="T">Action</i>(() =&gt; {</div></div><div class="a" style="left:33px;top:131px;width:1443px;height:2px;background:#434346;"></div><div class="a" style="left:1476px;top:131px;width:24px;height:852px;background:#3e3e42;"></div><div class="a" style="left:1477px;top:131px;width:22px;height:18px;background:#1e1e1e;"></div><svg class="a" style="left:1481px;top:133px" width="13" height="15" viewBox="0 0 13 15" ><path d="M0 6.5 H13 M0 8.5 H13" stroke="#fff" stroke-width="1.3"/><path d="M6.5 1 V5 M6.5 10 V14" stroke="#fff" stroke-width="1.3"/><path d="M4 3.5 L6.5 0.5 L9 3.5 Z M4 11.5 L6.5 14.5 L9 11.5 Z" fill="#fff"/></svg><svg class="a" style="left:1483px;top:155px" width="11" height="6" viewBox="0 0 11 6" ><path d="M0 6 L5.5 0 L11 6 Z" fill="#999999"/></svg><div class="a" style="left:1480px;top:391px;width:15px;height:192px;background:#686868;"></div><div class="a" style="left:1494px;top:418px;width:5px;height:6px;background:#6ad36a;"></div><div class="a" style="left:1494px;top:588px;width:5px;height:6px;background:#a0a0a0;"></div><div class="a" style="left:1476px;top:680px;width:23px;height:2px;background:#e8e8e8;"></div><svg class="a" style="left:1483px;top:953px" width="11" height="6" viewBox="0 0 11 6" ><path d="M0 0 L5.5 6 L11 0 Z" fill="#999999"/></svg><div class="a" style="left:32px;top:965px;width:1444px;height:18px;background:#3e3e42;"></div><div class="a" style="left:34px;top:966px;width:58px;height:16px;background:#333337;"></div><div class="t " style="left:35px;top:966px;font-size:12px">117 %</div><svg class="a" style="left:84px;top:972px" width="7" height="4" viewBox="0 0 7 4" ><path d="M0 0 H7 L3.5 4 Z" fill="#f1f1f1"/></svg><svg class="a" style="left:99px;top:968px" width="5" height="10" viewBox="0 0 5 10" ><path d="M5 0 L0 5 L5 10 Z" fill="#999999"/></svg><div class="a" style="left:110px;top:969px;width:1176px;height:9px;background:#686868;"></div><svg class="a" style="left:1465px;top:968px" width="5" height="10" viewBox="0 0 5 10" ><path d="M0 0 L5 5 L0 10 Z" fill="#999999"/></svg><div class="t " style="left:32px;top:990px;font-size:12px"><span class="cj">错误列表</span></div><div class="t " style="left:92px;top:990px;font-size:12px"><span class="cj">输出</span></div><div class="a" style="left:32px;top:1009px;width:48px;height:5px;background:#3f3f46;"></div><div class="a" style="left:92px;top:1009px;width:24px;height:5px;background:#3f3f46;"></div><div class="a" style="left:0px;top:1015px;width:1920px;height:25px;background:#007acc;"></div><svg class="a" style="left:5px;top:1021px" width="14" height="12" viewBox="0 0 14 12" ><path d="M3.5 0.5 H13 L10.5 11.5 H1 Z" fill="none" stroke="#fff" stroke-width="1.2"/></svg><div class="t " style="left:28px;top:1020px;font-size:12px;color:#fff"><span class="cj">就绪</span></div><div class="t " style="left:1160px;top:1020px;font-size:12px;color:#fff"><span class="cj">行</span> 116</div><div class="t " style="left:1252px;top:1020px;font-size:12px;color:#fff"><span class="cj">列</span> 28</div><div class="t " style="left:1344px;top:1020px;font-size:12px;color:#fff"><span class="cj">字符</span> 28</div><div class="t " style="left:1480px;top:1020px;font-size:12px;color:#fff">Ins</div><svg class="a" style="left:1776px;top:1021px" width="9" height="12" viewBox="0 0 9 12" ><path d="M4.5 1 V12 M1 4.5 L4.5 1 L8 4.5" stroke="#fff" stroke-width="1.6" fill="none"/></svg><div class="t " style="left:1795px;top:1020px;font-size:12px;color:#fff"><span class="cj">添加到源代码管理</span></div><svg class="a" style="left:1897px;top:1024px" width="8" height="5" viewBox="0 0 8 5" ><path d="M0 5 L4 0 L8 5 Z" fill="#fff"/></svg><div class="a" style="left:0;top:1040px;width:1920px;height:40px;background:linear-gradient(90deg,#1e3339 0%,#223b42 25%,#22393f 45%,#203242 65%,#1e2c48 85%,#1b294b 100%)"></div><svg class="a" style="left:16px;top:1052px" width="17" height="17" viewBox="0 0 17 17" ><path d="M0 2.5 L7 1.5 V8 H0 Z M8 1.3 L17 0 V8 H8 Z M0 9 H7 V15.5 L0 14.5 Z M8 9 H17 V17 L8 15.7 Z" fill="#fff"/></svg><svg class="a" style="left:64px;top:1051px" width="22" height="18" viewBox="0 0 22 18" ><path d="M0 1 H7 L8 0 H9 V3 H22 V18 H0 Z" fill="#f8d775"/><path d="M0 1 H8 V3 H0 Z" fill="#e8a317"/><path d="M5 10 H17 V18 H14 V13 H8 V18 H5 Z" fill="#3d95e0"/></svg><div class="a" style="left:55px;top:1077px;width:31px;height:3px;background:#76b9ed;"></div><div class="a" style="left:87px;top:1077px;width:8px;height:3px;background:#4d7fa6;"></div><div class="a" style="left:100px;top:1040px;width:48px;height:40px;background:#a8693a;"></div><div class="a" style="left:100px;top:1077px;width:48px;height:3px;background:#f7630c;"></div><svg class="a" style="left:112px;top:1050px" width="25" height="20" viewBox="0 0 25 20" ><ellipse cx="8.5" cy="7.5" rx="8.5" ry="7.5" fill="#3dc662"/><path d="M3 13 L3 16 L7 14 Z" fill="#3dc662"/><ellipse cx="17" cy="13" rx="7" ry="6" fill="#e8e8e8"/><path d="M20 17 L22 20 L17 18 Z" fill="#e8e8e8"/><circle cx="5.5" cy="5" r="1" fill="#1a5a2a"/><circle cx="11.5" cy="5" r="1" fill="#1a5a2a"/><circle cx="14.5" cy="11.5" r="0.9" fill="#888"/><circle cx="19.5" cy="11.5" r="0.9" fill="#888"/></svg><svg class="a" style="left:162px;top:1048px" width="23" height="23" viewBox="0 0 23 23" ><path d="M1 1 L18 3 V15 L1 13 Z" fill="#c0c8d8"/><path d="M2.5 2.5 L16.5 4 V13.5 L2.5 12 Z" fill="#1a3fcf"/><path d="M8 3 L16.5 4 V10 Z" fill="#6f8ff0" opacity="0.7"/><ellipse cx="9" cy="19" rx="6" ry="2.5" fill="#d0d0d0"/><circle cx="17" cy="17" r="5" fill="#e0e0e0"/><path d="M15 16 L17 15 M15 18 L17 19 M19 15 L17 17" stroke="#2a9a3a" stroke-width="1.2"/></svg><div class="a" style="left:153px;top:1077px;width:40px;height:3px;background:#76b9ed;"></div><svg class="a" style="left:210px;top:1050px" width="23" height="21" viewBox="0 0 23 21" ><rect x="0" y="5" width="6" height="12" fill="#a0a0a0"/><path d="M6 1 L22 2 V15 L6 14 Z" fill="#d8dde0" stroke="#b0b0b0"/><path d="M7.5 3 L20.5 3.5 V13.5 L7.5 12.5 Z" fill="#f4f8fc"/><path d="M8 9 L10 9 L11 5 L12.5 11 L14 7 L16 10 L18 8 L20 10" stroke="#3a7fc0" stroke-width="0.9" fill="none"/><ellipse cx="13" cy="19" rx="5" ry="2" fill="#c8c8c8"/><rect x="0.5" y="6" width="2" height="1.5" fill="#5c5"/></svg><div class="a" style="left:202px;top:1077px;width:40px;height:3px;background:#76b9ed;"></div><svg class="a" style="left:259px;top:1048px" width="24" height="24" viewBox="0 0 24 24" ><defs><linearGradient id="pm" x1="0" y1="0" x2="0" y2="1"><stop offset="0" stop-color="#ff8a30"/><stop offset="1" stop-color="#f2502a"/></linearGradient></defs><circle cx="12" cy="12" r="12" fill="url(#pm)"/><path d="M5 18 L17 7 M14 6 L19 5 L18 10" stroke="#fff" stroke-width="1.6" fill="none"/></svg><div class="a" style="left:251px;top:1077px;width:40px;height:3px;background:#76b9ed;"></div><svg class="a" style="left:309px;top:1049px" width="22" height="22" viewBox="0 0 22 22" ><circle cx="11" cy="11" r="11" fill="#2aa54a"/><path d="M11 11 L1.47 5.5 A11 11 0 0 1 20.53 5.5 Z" fill="#db4437"/><path d="M11 11 L20.53 5.5 A11 11 0 0 1 11 22 Z" fill="#fcc934"/><circle cx="11" cy="11" r="5" fill="#fff"/><circle cx="11" cy="11" r="4" fill="#4a8af4"/></svg><div class="a" style="left:300px;top:1077px;width:40px;height:3px;background:#76b9ed;"></div><div class="a" style="left:345px;top:1040px;width:48px;height:40px;background:#45565e;"></div><div class="a" style="left:345px;top:1077px;width:48px;height:3px;background:#76b9ed;"></div><svg class="a" style="left:0;top:0" width="1920" height="1080"><g transform="translate(357,1048) scale(1.176) translate(-11.8,-6.8)"><path d="M27 6.8 L32.2 9 L32.2 25 L27 27.2 Z" fill="#8c5fd1"/><path d="M11.8 21.8 L27 23 L27 27.2 Z" fill="#8c5fd1"/><path fill-rule="evenodd" d="M13 13 L15.5 12 L19.5 15 L22.5 10.2 L25 10.8 L25 20.5 L22.5 21 L19.5 16.8 L15.5 19.8 L13 18.8 Z M14.6 14.2 L14.6 17.6 L17.4 15.9 Z M22.5 12.8 L22.5 19 L19.9 15.9 Z" fill="#8c5fd1"/></g></svg><svg class="a" style="left:1598px;top:1057px" width="13" height="7" viewBox="0 0 13 7" ><path d="M0.5 6.5 L6.5 0.8 L12.5 6.5" stroke="#fff" stroke-width="1.3" fill="none"/></svg><svg class="a" style="left:1621px;top:1055px" width="14" height="11" viewBox="0 0 14 11" ><path d="M0 0 L3.5 10 L7 3 L10.5 10 L14 0" stroke="#f03c2a" stroke-width="2.5" fill="none"/></svg><svg class="a" style="left:1668px;top:1054px" width="16" height="12" viewBox="0 0 16 12" ><path d="M0.5 3 H4 M0.5 6 H4 M2 1 V3 M4 2 V7 H6" stroke="#fff" stroke-width="1" fill="none"/><rect x="5.5" y="3.5" width="9" height="7" fill="none" stroke="#fff"/><rect x="7" y="5" width="6" height="4" fill="#fff"/><rect x="14.5" y="5.5" width="1.5" height="3" fill="#fff"/></svg><svg class="a" style="left:1692px;top:1054px" width="17" height="13" viewBox="0 0 17 13" ><rect x="3.5" y="0.5" width="13" height="9" fill="none" stroke="#fff"/><path d="M10 10 V12.5 M6.5 12.5 H13.5 M0.5 2 V8 M0.5 2 H3" stroke="#fff" fill="none"/></svg><svg class="a" style="left:1716px;top:1054px" width="16" height="13" viewBox="0 0 16 13" ><path d="M0.5 4.5 H3 L7 1 V12 L3 8.5 H0.5 Z" stroke="#fff" fill="none"/><path d="M9.5 4.5 Q11 6.5 9.5 8.5 M11.5 2.5 Q14 6.5 11.5 10.5 M13.5 0.8 Q17 6.5 13.5 12.2" stroke="#fff" fill="none"/></svg><div class="t " style="left:1740px;top:1052px;font-size:15px;color:#fff"><span class="cj">英</span></div><div class="a" style="left:1768px;top:1052px;width:16px;height:16px;background:#ffffff;"></div><div class="t " style="left:1769px;top:1052px;font-size:13px;color:#000;font-weight:bold"><span class="cj">五</span></div><div class="t " style="left:1815px;top:1043px;font-size:12px;color:#fff">16:34</div><div class="t " style="left:1797px;top:1061px;font-size:12px;color:#fff;letter-spacing:0.6px">2021/12/20</div><svg class="a" style="left:1880px;top:1051px" width="22" height="22" viewBox="0 0 22 22" ><path d="M0.5 0.5 H15.5 V11.5 H5 L2 14 V11.5 H0.5 Z" fill="#fff"/><path d="M3 3.5 H13 M3 6 H13 M3 8.5 H10" stroke="#1b2a3e" stroke-width="1"/><circle cx="14" cy="16" r="7" fill="#333" stroke="#888" stroke-width="1"/><text x="11.3" y="20" font-family="Liberation Sans" font-size="10" font-weight="bold" fill="#fff">1</text></svg><div class="a" style="left:1915px;top:1040px;width:1px;height:40px;background:#5a6a7a;"></div><div class="a" style="left:1506px;top:88px;width:382px;height:875px;background:#2d2d30;border:1px solid #3f3f46"></div><div class="t " style="left:1511px;top:92px;font-size:12px;letter-spacing:0"><span class="cj">解决方案资源管理器</span></div><div class="a" style="left:1627px;top:97px;width:200px;height:5px;background-image:radial-gradient(#4a4a50 0.6px,transparent 0.8px);background-size:4px 4px"></div><svg class="a" style="left:1834px;top:99px" width="9" height="5" viewBox="0 0 9 5" ><path d="M0 0 H9 L4.5 5 Z" fill="#f1f1f1"/></svg><svg class="a" style="left:1853px;top:93px" width="7" height="13" viewBox="0 0 7 13" ><path d="M1 0.5 H6 M2 0.5 V6 M5 0.5 V6 M0 6.5 H7 M3.5 7 V13" stroke="#f1f1f1" stroke-width="1.3"/></svg><svg class="a" style="left:1869px;top:95px" width="10" height="10" viewBox="0 0 10 10" ><path d="M0.5 0.5 L9.5 9.5 M9.5 0.5 L0.5 9.5" stroke="#f1f1f1" stroke-width="1.5"/></svg><svg class="a" style="left:1516px;top:120px" width="12" height="12" viewBox="0 0 12 12" ><circle cx="6" cy="6" r="6" fill="#555"/><path d="M9 6 H3 M5.5 3.5 L3 6 L5.5 8.5" stroke="#2d2d30" stroke-width="1.6" fill="none"/></svg><svg class="a" style="left:1538px;top:120px" width="12" height="12" viewBox="0 0 12 12" ><circle cx="6" cy="6" r="6" fill="#555"/><path d="M3 6 H9 M6.5 3.5 L9 6 L6.5 8.5" stroke="#2d2d30" stroke-width="1.6" fill="none"/></svg><svg class="a" style="left:1559px;top:118px" width="15" height="15" viewBox="0 0 15 15" ><path d="M1 7.5 L7.5 1 L14 7.5 M3 6 V14 H12 V6" stroke="#d0d0d0" stroke-width="1.3" fill="none"/><rect x="6" y="9" width="3" height="5" fill="#d0d0d0"/></svg><svg class="a" style="left:1582px;top:118px" width="15" height="15" viewBox="0 0 15 15" ><rect x="5" y="1" width="9" height="7" fill="#dcb67a"/><rect x="0.5" y="6.5" width="9" height="6" fill="#2d2d30" stroke="#d0d0d0" stroke-width="1"/><path d="M2 4 Q2 1 5 1" stroke="#75beff" stroke-width="1.2" fill="none"/><path d="M13 10 Q13 13 10 13" stroke="#75beff" stroke-width="1.2" fill="none"/></svg><svg class="a" style="left:1603px;top:125px" width="6" height="3" viewBox="0 0 6 3" ><path d="M0 0 H6 L3 3 Z" fill="#999999"/></svg><div class="a" style="left:1616px;top:117px;width:1px;height:18px;background:#46464a;"></div><svg class="a" style="left:1626px;top:118px" width="14" height="15" viewBox="0 0 14 15" ><path d="M0 0.5 H5 M2.5 0.5 V4" stroke="#d0d0d0" stroke-width="1.2"/><circle cx="8.5" cy="9" r="5" fill="none" stroke="#d0d0d0" stroke-width="1.3"/><path d="M8.5 6 V9 H11" stroke="#d0d0d0" stroke-width="1.2" fill="none"/></svg><svg class="a" style="left:1646px;top:125px" width="6" height="3" viewBox="0 0 6 3" ><path d="M0 0 H6 L3 3 Z" fill="#999999"/></svg><svg class="a" style="left:1660px;top:119px" width="13" height="13" viewBox="0 0 13 13" ><path d="M12 3.5 H2 M4.5 1 L1.5 3.5 L4.5 6 M1 9.5 H11 M8.5 7 L11.5 9.5 L8.5 12" stroke="#d0d0d0" stroke-width="1.5" fill="none"/></svg><svg class="a" style="left:1682px;top:118px" width="13" height="14" viewBox="0 0 13 14" ><path d="M11 7.5 A5 5 0 1 1 7 2.5" stroke="#75beff" stroke-width="2" fill="none"/><path d="M6 0 L10 2.5 L6 5.5 Z" fill="#75beff"/></svg><svg class="a" style="left:1704px;top:119px" width="13" height="13" viewBox="0 0 13 13" ><path d="M5.5 2.5 V0.5 H12.5 V7.5 H10.5" stroke="#d0d0d0" stroke-width="1" fill="none"/><path d="M3.5 4.5 V2.5 H10.5 V9.5 H8.5" stroke="#d0d0d0" stroke-width="1" fill="none"/><rect x="0.5" y="5" width="8" height="7.5" fill="#2d2d30" stroke="#d0d0d0" stroke-width="1"/><path d="M2.5 8.5 H6.5" stroke="#75beff" stroke-width="1"/></svg><svg class="a" style="left:1725px;top:118px" width="15" height="15" viewBox="0 0 15 15" ><path d="M3 0.5 H0.5 V10 H3" stroke="#d0d0d0" stroke-width="1" fill="none"/><path d="M12 3 H14.5 V12.5 H12" stroke="#d0d0d0" stroke-width="1" fill="none"/><path d="M3.5 2.5 H9 L12 5.5 V14.5 H3.5 Z" stroke="#d0d0d0" stroke-width="1" fill="#2d2d30"/><path d="M5.5 7.5 H10 M5.5 9.5 H10 M5.5 11.5 H10" stroke="#d0d0d0" stroke-width="1"/></svg><div class="a" style="left:1747px;top:116px;width:1px;height:20px;background:#46464a;"></div><svg class="a" style="left:1756px;top:121px" width="13" height="9" viewBox="0 0 13 9" ><path d="M4.5 0.5 L0.8 4.5 L4.5 8.5 M8.5 0.5 L12.2 4.5 L8.5 8.5" stroke="#d0d0d0" stroke-width="1.5" fill="none"/></svg><svg class="a" style="left:1777px;top:118px" width="15" height="15" viewBox="0 0 15 15" ><path d="M2 13 L8 7" stroke="#d0d0d0" stroke-width="2.6" stroke-linecap="round"/><path d="M7 6 A4 4 0 0 1 12 1 L10 3.5 L11.5 5 L14 3 A4 4 0 0 1 9 8 Z" fill="#d0d0d0"/></svg><div class="a" style="left:1795px;top:114px;width:22px;height:24px;background:transparent;border:1px solid #3399ff"></div><div class="a" style="left:1799px;top:127px;width:6px;height:1.5px;background:#d0d0d0;"></div><div class="a" style="left:1805px;top:124px;width:8px;height:4px;background:#d0d0d0;"></div><div class="a" style="left:1508px;top:140px;width:379px;height:23px;background:#333337;"></div><div class="t " style="left:1512px;top:144px;font-size:12px;color:#999999;letter-spacing:0"><span class="cj">搜索解决方案资源管理器</span>(Ctrl+;)</div><svg class="a" style="left:1858px;top:144px" width="13" height="14" viewBox="0 0 13 14" ><circle cx="8.5" cy="5" r="4" fill="none" stroke="#f1f1f1" stroke-width="1.8"/><path d="M5.5 8 L1 12.5" stroke="#f1f1f1" stroke-width="2.2"/></svg><div class="a" style="left:1875px;top:140px;width:12px;height:23px;background:#3f3f46;"></div><svg class="a" style="left:1877px;top:150px" width="7" height="4" viewBox="0 0 7 4" ><path d="M0 0 H7 L3.5 4 Z" fill="#f1f1f1"/></svg><div class="a" style="left:1507px;top:163px;width:380px;height:799px;background:#252526;"></div><div class="a" style="left:1507px;top:566px;width:380px;height:19px;background:#3f3f46;"></div><svg class="a" style="left:1520px;top:170px" width="16" height="14" viewBox="0 0 16 14" ><path d="M2.5 4 V0.8 H14.5 V11.5 H9" stroke="#d0d0d0" stroke-width="1" fill="none"/><path d="M2.5 1.3 H14.5" stroke="#d0d0d0" stroke-width="1.6"/><path fill-rule="evenodd" d="M0.5 8.5 L2 8 L4 9.5 L6 7.5 L7.5 8 V14 L6 14.3 L4 12.2 L2 13.8 L0.5 13.2 Z M1.7 9.8 V12 L3 10.9 Z M6.2 9.3 V12.6 L4.8 10.9 Z" fill="#c586f0"/></svg><div class="t se" style="left:1540px;top:170px;"><span class="cj">解决方案</span>“MultiTenantService”(1 <span class="cj">个项目</span>)</div><svg class="a" style="left:1519px;top:192px" width="6" height="6" viewBox="0 0 6 6" ><path d="M6 0 V6 H0 Z" fill="#e0e0e0"/></svg><svg class="a" style="left:1538px;top:189px" width="14" height="13" viewBox="0 0 14 13" ><rect x="0.5" y="0.5" width="13" height="12" fill="none" stroke="#6ad36a" stroke-width="1"/><text x="1.8" y="9.8" font-family="Liberation Sans" font-size="8" font-weight="bold" letter-spacing="-0.6" fill="#e0e0e0">C#</text></svg><div class="t se" style="left:1558px;top:189px;font-weight:bold">MultiTenantService</div><svg class="a" style="left:1535px;top:209.5px" width="7" height="11" viewBox="0 0 7 11" ><path d="M1 1 L6 5.5 L1 10 Z" fill="none" stroke="#e0e0e0" stroke-width="1.1"/></svg><svg class="a" style="left:1557px;top:208px" width="14" height="14" viewBox="0 0 14 14" ><path d="M1.5 12.5 L7 7" stroke="#d0d0d0" stroke-width="2.8"/><path d="M6 6 A4 4 0 0 1 11.5 0.5 L9.5 3 L11 4.5 L13.5 2.5 A4 4 0 0 1 8 8 Z" fill="#d0d0d0"/></svg><div class="t se" style="left:1576px;top:208px;">Properties</div><svg class="a" style="left:1535px;top:228.5px" width="7" height="11" viewBox="0 0 7 11" ><path d="M1 1 L6 5.5 L1 10 Z" fill="none" stroke="#e0e0e0" stroke-width="1.1"/></svg><svg class="a" style="left:1556px;top:229px" width="15" height="7" viewBox="0 0 15 7" ><rect x="0" y="1.5" width="4" height="4" fill="#d0d0d0"/><rect x="4" y="3" width="3" height="1" fill="#d0d0d0"/><rect x="8" y="0.5" width="6" height="6" fill="#d0d0d0"/></svg><div class="t se" style="left:1576px;top:227px;"><span class="cj">引用</span></div><svg class="a" style="left:1535px;top:247.5px" width="7" height="11" viewBox="0 0 7 11" ><path d="M1 1 L6 5.5 L1 10 Z" fill="none" stroke="#e0e0e0" stroke-width="1.1"/></svg><svg class="a" style="left:1557px;top:246px" width="13" height="12" viewBox="0 0 13 12" ><path d="M0 2 H5 L6 3 H13 V12 H0 Z" fill="#dcb67a"/><path d="M0 4.5 H13" stroke="#c9a062" stroke-width="0.8"/></svg><div class="t se" style="left:1576px;top:246px;">Attrubutes</div><svg class="a" style="left:1535px;top:266.5px" width="7" height="11" viewBox="0 0 7 11" ><path d="M1 1 L6 5.5 L1 10 Z" fill="none" stroke="#e0e0e0" stroke-width="1.1"/></svg><svg class="a" style="left:1557px;top:265px" width="13" height="12" viewBox="0 0 13 12" ><path d="M0 2 H5 L6 3 H13 V12 H0 Z" fill="#dcb67a"/><path d="M0 4.5 H13" stroke="#c9a062" stroke-width="0.8"/></svg><div class="t se" style="left:1576px;top:265px;">BaseCore</div><svg class="a" style="left:1535px;top:285.5px" width="7" height="11" viewBox="0 0 7 11" ><path d="M1 1 L6 5.5 L1 10 Z" fill="none" stroke="#e0e0e0" stroke-width="1.1"/></svg><svg class="a" style="left:1557px;top:284px" width="13" height="12" viewBox="0 0 13 12" ><path d="M0 2 H5 L6 3 H13 V12 H0 Z" fill="#dcb67a"/><path d="M0 4.5 H13" stroke="#c9a062" stroke-width="0.8"/></svg><div class="t se" style="left:1576px;top:284px;">Communication</div><svg class="a" style="left:1535px;top:304.5px" width="7" height="11" viewBox="0 0 7 11" ><path d="M1 1 L6 5.5 L1 10 Z" fill="none" stroke="#e0e0e0" stroke-width="1.1"/></svg><svg class="a" style="left:1557px;top:303px" width="13" height="12" viewBox="0 0 13 12" ><path d="M0 2 H5 L6 3 H13 V12 H0 Z" fill="#dcb67a"/><path d="M0 4.5 H13" stroke="#c9a062" stroke-width="0.8"/></svg><div class="t se" style="left:1576px;top:303px;">Controllers</div><svg class="a" style="left:1535px;top:323.5px" width="7" height="11" viewBox="0 0 7 11" ><path d="M1 1 L6 5.5 L1 10 Z" fill="none" stroke="#e0e0e0" stroke-width="1.1"/></svg><svg class="a" style="left:1557px;top:322px" width="13" height="12" viewBox="0 0 13 12" ><path d="M0 2 H5 L6 3 H13 V12 H0 Z" fill="#dcb67a"/><path d="M0 4.5 H13" stroke="#c9a062" stroke-width="0.8"/></svg><div class="t se" style="left:1576px;top:322px;">DataTypes</div><svg class="a" style="left:1535px;top:342.5px" width="7" height="11" viewBox="0 0 7 11" ><path d="M1 1 L6 5.5 L1 10 Z" fill="none" stroke="#e0e0e0" stroke-width="1.1"/></svg><svg class="a" style="left:1557px;top:341px" width="13" height="12" viewBox="0 0 13 12" ><path d="M0 2 H5 L6 3 H13 V12 H0 Z" fill="#dcb67a"/><path d="M0 4.5 H13" stroke="#c9a062" stroke-width="0.8"/></svg><div class="t se" style="left:1576px;top:341px;">Entities</div><svg class="a" style="left:1535px;top:361.5px" width="7" height="11" viewBox="0 0 7 11" ><path d="M1 1 L6 5.5 L1 10 Z" fill="none" stroke="#e0e0e0" stroke-width="1.1"/></svg><svg class="a" style="left:1557px;top:360px" width="13" height="12" viewBox="0 0 13 12" ><path d="M0 2 H5 L6 3 H13 V12 H0 Z" fill="#dcb67a"/><path d="M0 4.5 H13" stroke="#c9a062" stroke-width="0.8"/></svg><div class="t se" style="left:1576px;top:360px;">GlobalVariableos</div><svg class="a" style="left:1535px;top:380.5px" width="7" height="11" viewBox="0 0 7 11" ><path d="M1 1 L6 5.5 L1 10 Z" fill="none" stroke="#e0e0e0" stroke-width="1.1"/></svg><svg class="a" style="left:1557px;top:379px" width="13" height="12" viewBox="0 0 13 12" ><path d="M0 2 H5 L6 3 H13 V12 H0 Z" fill="#dcb67a"/><path d="M0 4.5 H13" stroke="#c9a062" stroke-width="0.8"/></svg><div class="t se" style="left:1576px;top:379px;">Lib</div><svg class="a" style="left:1535px;top:399.5px" width="7" height="11" viewBox="0 0 7 11" ><path d="M1 1 L6 5.5 L1 10 Z" fill="none" stroke="#e0e0e0" stroke-width="1.1"/></svg><svg class="a" style="left:1557px;top:398px" width="13" height="12" viewBox="0 0 13 12" ><path d="M0 2 H5 L6 3 H13 V12 H0 Z" fill="#dcb67a"/><path d="M0 4.5 H13" stroke="#c9a062" stroke-width="0.8"/></svg><div class="t se" style="left:1576px;top:398px;">Log</div><svg class="a" style="left:1535px;top:418.5px" width="7" height="11" viewBox="0 0 7 11" ><path d="M1 1 L6 5.5 L1 10 Z" fill="none" stroke="#e0e0e0" stroke-width="1.1"/></svg><svg class="a" style="left:1557px;top:417px" width="13" height="12" viewBox="0 0 13 12" ><path d="M0 2 H5 L6 3 H13 V12 H0 Z" fill="#dcb67a"/><path d="M0 4.5 H13" stroke="#c9a062" stroke-width="0.8"/></svg><div class="t se" style="left:1576px;top:417px;">Model</div><svg class="a" style="left:1535px;top:437.5px" width="7" height="11" viewBox="0 0 7 11" ><path d="M1 1 L6 5.5 L1 10 Z" fill="none" stroke="#e0e0e0" stroke-width="1.1"/></svg><svg class="a" style="left:1557px;top:436px" width="13" height="12" viewBox="0 0 13 12" ><path d="M0 2 H5 L6 3 H13 V12 H0 Z" fill="#dcb67a"/><path d="M0 4.5 H13" stroke="#c9a062" stroke-width="0.8"/></svg><div class="t se" style="left:1576px;top:436px;">Sdk</div><svg class="a" style="left:1535px;top:456.5px" width="7" height="11" viewBox="0 0 7 11" ><path d="M1 1 L6 5.5 L1 10 Z" fill="none" stroke="#e0e0e0" stroke-width="1.1"/></svg><svg class="a" style="left:1557px;top:455px" width="13" height="12" viewBox="0 0 13 12" ><path d="M0 2 H5 L6 3 H13 V12 H0 Z" fill="#dcb67a"/><path d="M0 4.5 H13" stroke="#c9a062" stroke-width="0.8"/></svg><div class="t se" style="left:1576px;top:455px;">SystemControllers</div><svg class="a" style="left:1557px;top:474px" width="13" height="12" viewBox="0 0 13 12" ><path d="M0 2 H5 L6 3 H13 V12 H0 Z" fill="#dcb67a"/><path d="M0 4.5 H13" stroke="#c9a062" stroke-width="0.8"/></svg><div class="t se" style="left:1576px;top:474px;">SystemRoot</div><svg class="a" style="left:1557px;top:493px" width="13" height="12" viewBox="0 0 13 12" ><path d="M0 2 H5 L6 3 H13 V12 H0 Z" fill="#dcb67a"/><path d="M0 4.5 H13" stroke="#c9a062" stroke-width="0.8"/></svg><div class="t se" style="left:1576px;top:493px;">wwwroot</div><svg class="a" style="left:1558px;top:512px" width="11" height="14" viewBox="0 0 11 14" ><path d="M0.5 0.5 H7 L10.5 4 V13.5 H0.5 Z" stroke="#d0d0d0" fill="none"/><path d="M3 5 H5 M3 7.5 H8 M3 10 H8" stroke="#d0d0d0" stroke-dasharray="1 1"/></svg><div class="t se" style="left:1576px;top:512px;">aodqv-66kod-003.ico</div><svg class="a" style="left:1556px;top:531px" width="14" height="14" viewBox="0 0 14 14" ><path d="M5.5 0.5 H10 L13.5 4 V13.5 H5.5" stroke="#d0d0d0" fill="none"/><circle cx="4" cy="5.5" r="3" fill="none" stroke="#d0d0d0" stroke-width="1.4"/><path d="M4 8 V13" stroke="#d0d0d0" stroke-width="1.6"/></svg><div class="t se" style="left:1576px;top:531px;">App.config</div><svg class="a" style="left:1556px;top:550px" width="15" height="14" viewBox="0 0 15 14" ><rect x="2.5" y="0.5" width="12" height="9" fill="none" stroke="#d0d0d0"/><path d="M5 3 H12 M5 5 H12 M5 7 H9" stroke="#d0d0d0" stroke-dasharray="1 1"/><circle cx="3" cy="10" r="2" fill="#d0d0d0"/><path d="M2 11 V14 M4 11 V14" stroke="#d0d0d0"/></svg><div class="t se" style="left:1576px;top:550px;">IcsRadeTech Multi Tenant Service.pfx</div><svg class="a" style="left:1535px;top:570.5px" width="7" height="11" viewBox="0 0 7 11" ><path d="M1 1 L6 5.5 L1 10 Z" fill="none" stroke="#e0e0e0" stroke-width="1.1"/></svg><svg class="a" style="left:1556px;top:569px" width="14" height="14" viewBox="0 0 14 14" ><path d="M4.5 0.5 H10 L13.5 4 V13.5 H4.5 V9" stroke="#d0d0d0" stroke-width="1" fill="none"/><path d="M10 0.5 V4 H13.5" stroke="#d0d0d0" stroke-width="1" fill="none"/><rect x="0.5" y="10.5" width="3" height="3" fill="none" stroke="#d0d0d0" stroke-width="0.9"/><rect x="2" y="8" width="2" height="2" fill="none" stroke="#d0d0d0" stroke-width="0.8"/></svg><div class="t se" style="left:1576px;top:569px;">MulituTenantCommunicationServer.cs</div><svg class="a" style="left:1535px;top:589.5px" width="7" height="11" viewBox="0 0 7 11" ><path d="M1 1 L6 5.5 L1 10 Z" fill="none" stroke="#e0e0e0" stroke-width="1.1"/></svg><svg class="a" style="left:1556px;top:588px" width="14" height="14" viewBox="0 0 14 14" ><path d="M4.5 0.5 H10 L13.5 4 V13.5 H4.5 V9" stroke="#d0d0d0" stroke-width="1" fill="none"/><path d="M10 0.5 V4 H13.5" stroke="#d0d0d0" stroke-width="1" fill="none"/><rect x="0.5" y="10.5" width="3" height="3" fill="none" stroke="#d0d0d0" stroke-width="0.9"/><rect x="2" y="8" width="2" height="2" fill="none" stroke="#d0d0d0" stroke-width="0.8"/></svg><div class="t se" style="left:1576px;top:588px;">MulituTenantCommunicationServiceInstaller.cs</div><svg class="a" style="left:1535px;top:608.5px" width="7" height="11" viewBox="0 0 7 11" ><path d="M1 1 L6 5.5 L1 10 Z" fill="none" stroke="#e0e0e0" stroke-width="1.1"/></svg><svg class="a" style="left:1556px;top:607px" width="14" height="14" viewBox="0 0 14 14" ><path d="M4.5 0.5 H10 L13.5 4 V13.5 H4.5 V9" stroke="#d0d0d0" stroke-width="1" fill="none"/><path d="M10 0.5 V4 H13.5" stroke="#d0d0d0" stroke-width="1" fill="none"/><rect x="0.5" y="10.5" width="3" height="3" fill="none" stroke="#d0d0d0" stroke-width="0.9"/><rect x="2" y="8" width="2" height="2" fill="none" stroke="#d0d0d0" stroke-width="0.8"/></svg><div class="t se" style="left:1576px;top:607px;">MultiTenantServer.cs</div><svg class="a" style="left:1535px;top:627.5px" width="7" height="11" viewBox="0 0 7 11" ><path d="M1 1 L6 5.5 L1 10 Z" fill="none" stroke="#e0e0e0" stroke-width="1.1"/></svg><svg class="a" style="left:1556px;top:626px" width="14" height="14" viewBox="0 0 14 14" ><path d="M4.5 0.5 H10 L13.5 4 V13.5 H4.5 V9" stroke="#d0d0d0" stroke-width="1" fill="none"/><path d="M10 0.5 V4 H13.5" stroke="#d0d0d0" stroke-width="1" fill="none"/><rect x="0.5" y="10.5" width="3" height="3" fill="none" stroke="#d0d0d0" stroke-width="0.9"/><rect x="2" y="8" width="2" height="2" fill="none" stroke="#d0d0d0" stroke-width="0.8"/></svg><div class="t se" style="left:1576px;top:626px;">MultiTenantServerInstaller.cs</div><svg class="a" style="left:1535px;top:646.5px" width="7" height="11" viewBox="0 0 7 11" ><path d="M1 1 L6 5.5 L1 10 Z" fill="none" stroke="#e0e0e0" stroke-width="1.1"/></svg><div class="t " style="left:1557px;top:644px;font-size:10px;font-weight:bold;color:#6ad36a;letter-spacing:-0.5px">C#</div><div class="t se" style="left:1576px;top:645px;">Program.cs</div><svg class="a" style="left:1535px;top:665.5px" width="7" height="11" viewBox="0 0 7 11" ><path d="M1 1 L6 5.5 L1 10 Z" fill="none" stroke="#e0e0e0" stroke-width="1.1"/></svg><svg class="a" style="left:1556px;top:664px" width="14" height="14" viewBox="0 0 14 14" ><path d="M4.5 0.5 H10 L13.5 4 V13.5 H4.5 V9" stroke="#d0d0d0" stroke-width="1" fill="none"/><path d="M10 0.5 V4 H13.5" stroke="#d0d0d0" stroke-width="1" fill="none"/><rect x="0.5" y="10.5" width="3" height="3" fill="none" stroke="#d0d0d0" stroke-width="0.9"/><rect x="2" y="8" width="2" height="2" fill="none" stroke="#d0d0d0" stroke-width="0.8"/></svg><div class="t se" style="left:1576px;top:664px;">SystemMannagementServerSerivce.cs</div><svg class="a" style="left:1535px;top:684.5px" width="7" height="11" viewBox="0 0 7 11" ><path d="M1 1 L6 5.5 L1 10 Z" fill="none" stroke="#e0e0e0" stroke-width="1.1"/></svg><svg class="a" style="left:1556px;top:683px" width="14" height="14" viewBox="0 0 14 14" ><path d="M4.5 0.5 H10 L13.5 4 V13.5 H4.5 V9" stroke="#d0d0d0" stroke-width="1" fill="none"/><path d="M10 0.5 V4 H13.5" stroke="#d0d0d0" stroke-width="1" fill="none"/><rect x="0.5" y="10.5" width="3" height="3" fill="none" stroke="#d0d0d0" stroke-width="0.9"/><rect x="2" y="8" width="2" height="2" fill="none" stroke="#d0d0d0" stroke-width="0.8"/></svg><div class="t se" style="left:1576px;top:683px;">SystemMannagementServerSerivceInstaller.cs</div><div class="a" style="left:1506px;top:962px;width:121px;height:21px;background:#252526;border:1px solid #3f3f46;border-top:none"></div><div class="t " style="left:1512px;top:964px;font-size:12px;color:#0097fb;letter-spacing:0"><span class="cj">解决方案资源管理器</span></div><div class="t " style="left:1632px;top:964px;font-size:12px;color:#f1f1f1;letter-spacing:0"><span class="cj">团队资源管理器</span></div><div class="a" style="left:1914px;top:88px;width:6px;height:25px;background:#3f3f46;"></div><div class="t" style="left:1910px;top:88px;transform-origin:0 0;transform:rotate(90deg);font-size:12.5px;color:#f1f1f1;font-size:11.8px;letter-spacing:0"><span class="cj">属性</span></div><script>
(function(){try{
var d=document,s=d.createElement('span');
s.style.cssText='position:absolute;left:0;top:0;visibility:hidden;font-family:"Liberation Sans",sans-serif;font-size:100px;letter-spacing:0;white-space:pre';
s.textContent='这里写处理项目服务器';
d.body.appendChild(s);var r=s.getBoundingClientRect().width/1000;d.body.removeChild(s);
s.style.fontFamily='"Liberation Mono",monospace';d.body.appendChild(s);var rm=s.getBoundingClientRect().width/1000;d.body.removeChild(s);
if(r>0&&r<0.9){var st=d.createElement('style');
st.textContent='.cj{font-size:1.6em;letter-spacing:'+(0.625-r).toFixed(3)+'em!important}.code b.w{font-size:26px!important;letter-spacing:'+(15.2-26*rm).toFixed(2)+'px!important}';
d.head.appendChild(st);}
}catch(e){}})();
</script></body></html>
